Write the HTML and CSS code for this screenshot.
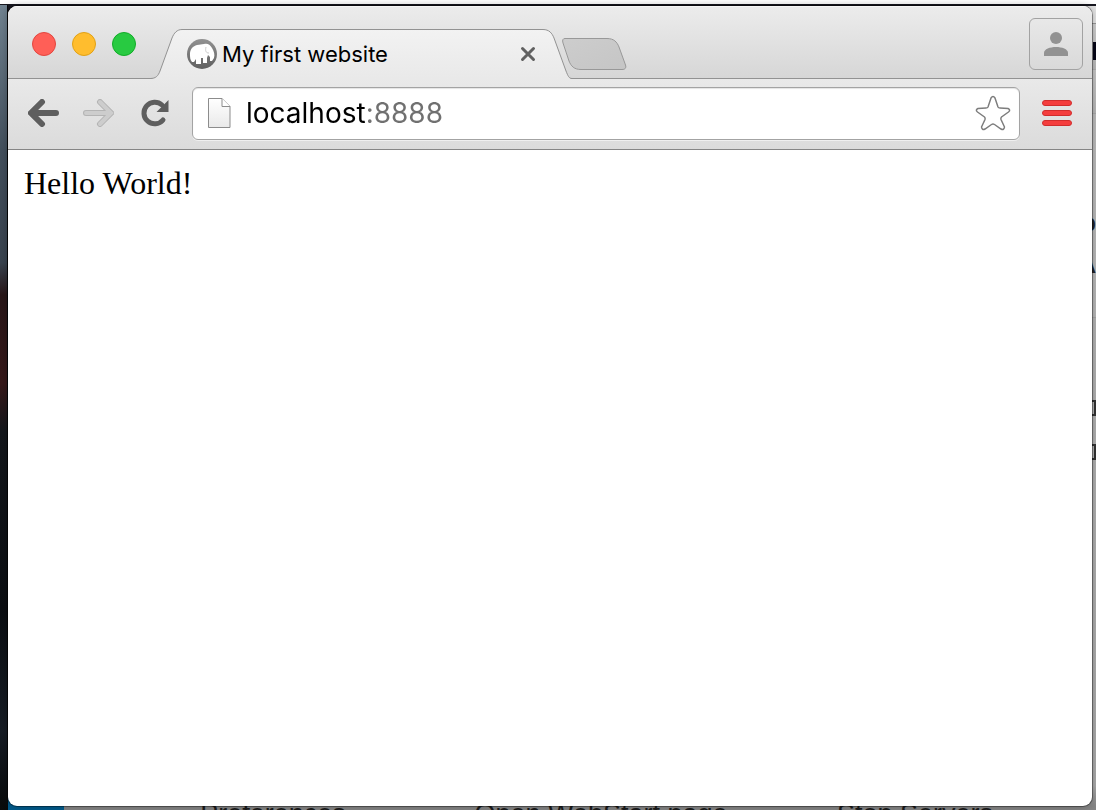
FILE: index.html
```html
<!DOCTYPE html>
<html lang="en">
<head>
  <meta charset="UTF-8">
  <title>My first website</title>
  <link rel="stylesheet" href="styles.css">
</head>
<body>
  <!-- desktop and the app window behind the browser -->
  <div class="desktop" aria-hidden="true">
    <div class="wallpaper"></div>
    <div class="app">
      <div class="app-side">
        <span class="side-title">I</span>
        <span class="side-letter">p</span>
        <span class="side-letter">A</span>
        <span class="side-box"></span>
        <span class="side-box"></span>
      </div>
      <div class="app-footer">
        <span>Preferences</span>
        <span>Open WebStart page</span>
        <span>Stop Servers</span>
      </div>
    </div>
  </div>

  <!-- browser window -->
  <div class="browser">
    <div class="tab-strip">
      <div class="window-buttons">
        <button class="dot close" aria-label="Close"></button>
        <button class="dot minimize" aria-label="Minimize"></button>
        <button class="dot zoom" aria-label="Zoom"></button>
      </div>

      <div class="tab">
        <svg class="tab-shape" viewBox="0 0 420 50" width="420" height="50">
          <defs>
            <linearGradient id="tab-fill" x1="0" y1="0" x2="0" y2="1">
              <stop offset="0" stop-color="#f2f2f2"/>
              <stop offset="1" stop-color="#e9e9e9"/>
            </linearGradient>
          </defs>
          <path d="M-2 50V49.5C4 49.5 6 47 8 42L20 9C22 4 25 .5 30 .5H391C397 .5 400 4 402 9L414 42C416 47 417 49.5 420 49.5V50Z" fill="url(#tab-fill)"/>
          <path d="M-2 49.5C4 49.5 6 47 8 42L20 9C22 4 25 .5 30 .5H391C397 .5 400 4 402 9L414 42C416 47 417 49.5 420 49.5" fill="none" stroke="#929292"/>
        </svg>
        <!-- elephant favicon -->
        <svg class="favicon" viewBox="0 0 32 32" width="32" height="32">
          <defs>
            <linearGradient id="ring" x1="0" y1="0" x2="0" y2="1">
              <stop offset="0" stop-color="#929292"/>
              <stop offset="1" stop-color="#606060"/>
            </linearGradient>
          </defs>
          <circle cx="16" cy="16" r="15" fill="url(#ring)"/>
          <path d="M4 16C4 11 7 8 11 7C14 7 15 6 18 6C21 5 24 6 26 10C28 13 29 17 28 20L26 23H24V19L22 17L21 20V25H17V20H15V26H10V21L8 24H6C4 22 4 19 4 16Z" fill="#fff"/>
          <path d="M20 9C19 13 20 15 23 15" fill="none" stroke="#ccc"/>
        </svg>
        <span class="tab-title">My first website</span>
        <button class="tab-close" aria-label="Close tab">
          <svg viewBox="0 0 16 16" width="16" height="16"><path d="M2.500 2.500L13.500 13.500M13.500 2.500L2.500 13.500" fill="none" stroke="#606060" stroke-width="3" stroke-linecap="round"/></svg>
        </button>
      </div>

      <button class="new-tab" aria-label="New tab">
        <svg viewBox="0 0 66 34" width="66" height="34">
          <defs>
            <linearGradient id="new-fill" x1="0" y1="0" x2="1" y2="1">
              <stop offset="0" stop-color="#cdcdcd"/>
              <stop offset="1" stop-color="#c5c5c5"/>
            </linearGradient>
          </defs>
          <path d="M4 1.500H46C53 1.500 56 5 58 10L64.500 28C65.500 31 64 32.500 61 32.500H20C13 32.500 10 29 8 24L2 6C1 3 2 1.500 4 1.500Z" fill="url(#new-fill)" stroke="#989898"/>
        </svg>
      </button>

      <button class="profile" aria-label="Profile">
        <svg viewBox="0 0 26 26" width="26" height="26">
          <circle cx="13" cy="7" r="6" fill="#929292"/>
          <path d="M1 25V22C1 18 7 16 13 16S25 18 25 22V25Z" fill="#929292"/>
        </svg>
      </button>
    </div>

    <div class="toolbar">
      <button class="tool" aria-label="Back">
        <svg viewBox="0 0 32 28" width="32" height="28"><path d="M28 14H5M14 3L3 14L14 25" fill="none" stroke="#5e5e5e" stroke-width="6" stroke-linecap="round"/></svg>
      </button>
      <button class="tool" aria-label="Forward" disabled>
        <svg viewBox="0 0 32 28" width="32" height="28"><path d="M4 14H27M18 3L29 14L18 25" fill="none" stroke="#b4b4b4" stroke-width="6" stroke-linecap="round"/><path d="M4 14H27M18 3L29 14L18 25" fill="none" stroke="#cdcdcd" stroke-width="4" stroke-linecap="round"/></svg>
      </button>
      <button class="tool reload" aria-label="Reload">
        <svg viewBox="0 0 28 28" width="28" height="28"><path d="M22 21A10.800 10.800 0 1 1 21 6" fill="none" stroke="#5e5e5e" stroke-width="5" stroke-linecap="round"/><path d="M27.500 1V13H15.500Z" fill="#5e5e5e"/></svg>
      </button>

      <div class="omnibox">
        <svg class="page-icon" viewBox="0 0 24 32" width="24" height="32">
          <defs>
            <linearGradient id="page-fill" x1="0" y1="0" x2="0" y2="1">
              <stop offset="0" stop-color="#fff"/>
              <stop offset="1" stop-color="#e9e9e9"/>
            </linearGradient>
          </defs>
          <path d="M1.500 1.500H15L23 9.500V30.500H1.500Z" fill="url(#page-fill)" stroke="#8c8c8c"/>
          <path d="M15 1.500V9.500H23" fill="#fff" stroke="#8c8c8c"/>
        </svg>
        <input class="address" type="text" value="localhost:8888" aria-label="Address" spellcheck="false">
        <button class="star" aria-label="Bookmark this page">
          <svg viewBox="0 0 36 36" width="36" height="36"><path d="M16 3Q18 0 20 3L23 12Q23.500 13 25 13L33 13.500Q36 15 33.500 17L26.500 22Q25.500 23 26 24.500L29.500 32Q29 35.500 26 34L19.500 29.500Q18 28.500 16.500 29.500L10 34Q7 35.500 6.500 32L10 24.500Q10.500 23 9.500 22L2.500 17Q0 15 3 13.500L11 13Q12.500 13 13 12Z" fill="#fff" stroke="#7d7d7d" stroke-width="1.500"/></svg>
        </button>
      </div>

      <button class="menu" aria-label="Menu">
        <span></span>
        <span></span>
        <span></span>
      </button>
    </div>

    <main class="page">Hello World!</main>
  </div>
</body>
</html>
```

FILE: styles.css
```css
* { box-sizing: border-box; }

body {
  margin: 0;
  height: 100vh;
  overflow: hidden;
  padding: 6px 4px 4px 8px;
  font-family: Inter, "Liberation Sans", sans-serif;
}

button {
  display: flex;
  align-items: center;
  justify-content: center;
  padding: 0;
  border: 0;
  background: none;
}
svg { display: block; flex: none; }

/* desktop behind the window */
.desktop {
  position: absolute;
  inset: 0;
  display: flex;
  overflow: hidden;
  border-top: 4px solid #fff;
  background: linear-gradient(#17171f 50%, #005b8c 50%);
}
.wallpaper {
  width: 8px;
  border-right: 1px solid #08090b;
  background: linear-gradient(#718391, #43505d 18%, #39434f 32%, #281719 36%, #37191a 47%, #14171c 53%, #0b0e12 75%, #171d25 90%, #080a0b);
  margin-top: 1px;
}
.app {
  flex: 1;
  display: flex;
  flex-direction: column;
  margin: 2px 0 0 56px;
  background: linear-gradient(#e4e4e4 17px, #999 17px, #999 18px, #d0d0d0 18px, #bababa 63px, #999 63px, #c7c7c7 64px, #b8b8b8 107px, #999 107px, #bcbcbc 108px, #b8b8b8 311px, #999 311px, #b3b3b3 312px, #aaa 780px, #858585 800px);
}
.app-side {
  flex: 1;
  display: flex;
  flex-direction: column;
  align-items: flex-end;
  color: #222;
  font-family: "Liberation Sans", sans-serif;
  font-size: 24px;
  line-height: 42px;
}
.side-title {
  height: 18px;
  line-height: 18px;
  margin: 36px 0 142px;
  width: 3px;
  overflow: hidden;
  background: #060617;
  color: #060617;
}
.side-letter { font-weight: bold; }
.side-box {
  width: 6px;
  height: 16px;
  margin-bottom: 28px;
  border: 2px solid #333;
}
.side-letter + .side-box { margin-top: 114px; }
.app-footer {
  flex: none;
  display: grid;
  grid-template-columns: 328fr 328fr 300fr;
  padding: 0 31px 0 45px;
  height: 12px;
  text-align: center;
  font: 27px/32px "Liberation Sans", sans-serif;
  color: #1c1c1c;
}

/* browser window */
.browser {
  position: relative;
  display: flex;
  flex-direction: column;
  height: 100%;
  border-radius: 9px;
  overflow: hidden;
  background: #fff;
  box-shadow: 0 0 0 1px rgba(0, 0, 0, .35), 0 0 8px rgba(0, 0, 0, .3);
}

.tab-strip {
  flex: none;
  display: flex;
  height: 73px;
  background: linear-gradient(#ececec, #d6d6d6);
  box-shadow: inset 0 1px #f7f7f7, inset 0 -1px #929292;
}
.window-buttons {
  display: flex;
  gap: 16px;
  width: 144px;
  padding: 26px 0 0 24px;
}
.dot {
  width: 24px;
  height: 24px;
  border: 1px solid;
  border-radius: 50%;
}
.close { background: #ff5f57; border-color: #e2463f; }
.minimize { background: #ffbd2e; border-color: #e1a116; }
.zoom { background: #28ca41; border-color: #12ac28; }

.tab {
  position: relative;
  display: flex;
  align-items: center;
  width: 420px;
  height: 50px;
  margin-top: 23px;
  padding: 0 36px 0 34px;
}
.tab-shape { position: absolute; inset: 0; overflow: visible; }
.favicon, .tab-title, .tab-close { position: relative; }
.tab-title {
  flex: 1;
  padding-left: 4px;
  font-size: 22px;
  line-height: 28px;
  color: #000;
}

.new-tab { height: 34px; margin: 31px 0 0 -11px; }

.profile {
  width: 54px;
  height: 52px;
  margin: 12px 9px 0 auto;
  border: 1px solid #a2a2a2;
  border-radius: 6px;
}

.toolbar {
  flex: none;
  display: flex;
  align-items: center;
  height: 71px;
  padding: 0 20px 2px;
  border-bottom: 1px solid #858585;
  background: linear-gradient(#e9e9e9, #dbdbdb);
}
.tool { width: 32px; margin-right: 22px; }
.reload { width: 38px; margin-right: 18px; }

.omnibox {
  flex: 1;
  display: flex;
  align-items: center;
  height: 53px;
  margin-right: 22px;
  padding: 0 8px 0 14px;
  border: 1px solid #a3a3a3;
  border-radius: 6px;
  background: #fff;
  box-shadow: inset 0 1px 1px #e4e4e4, 0 1px #efefef;
}
.address {
  flex: 1;
  min-width: 0;
  height: 40px;
  padding: 0;
  margin-left: 15px;
  border: 0;
  outline: 0;
  font: 28px Inter, "Liberation Sans", sans-serif;
  /* host in black, port in grey */
  color: transparent;
  background: linear-gradient(90deg, #000 120px, #707070 120px);
  -webkit-background-clip: text;
  background-clip: text;
  caret-color: #000;
}

.menu {
  flex-direction: column;
  gap: 4px;
  width: 30px;
}
.menu span {
  width: 30px;
  height: 6px;
  border: 1px solid #d12d2d;
  border-radius: 3px;
  background: #f43e3e;
}

.page {
  flex: 1;
  padding: 16px;
  font: 32px/34px "Liberation Serif", serif;
  color: #000;
}
```
